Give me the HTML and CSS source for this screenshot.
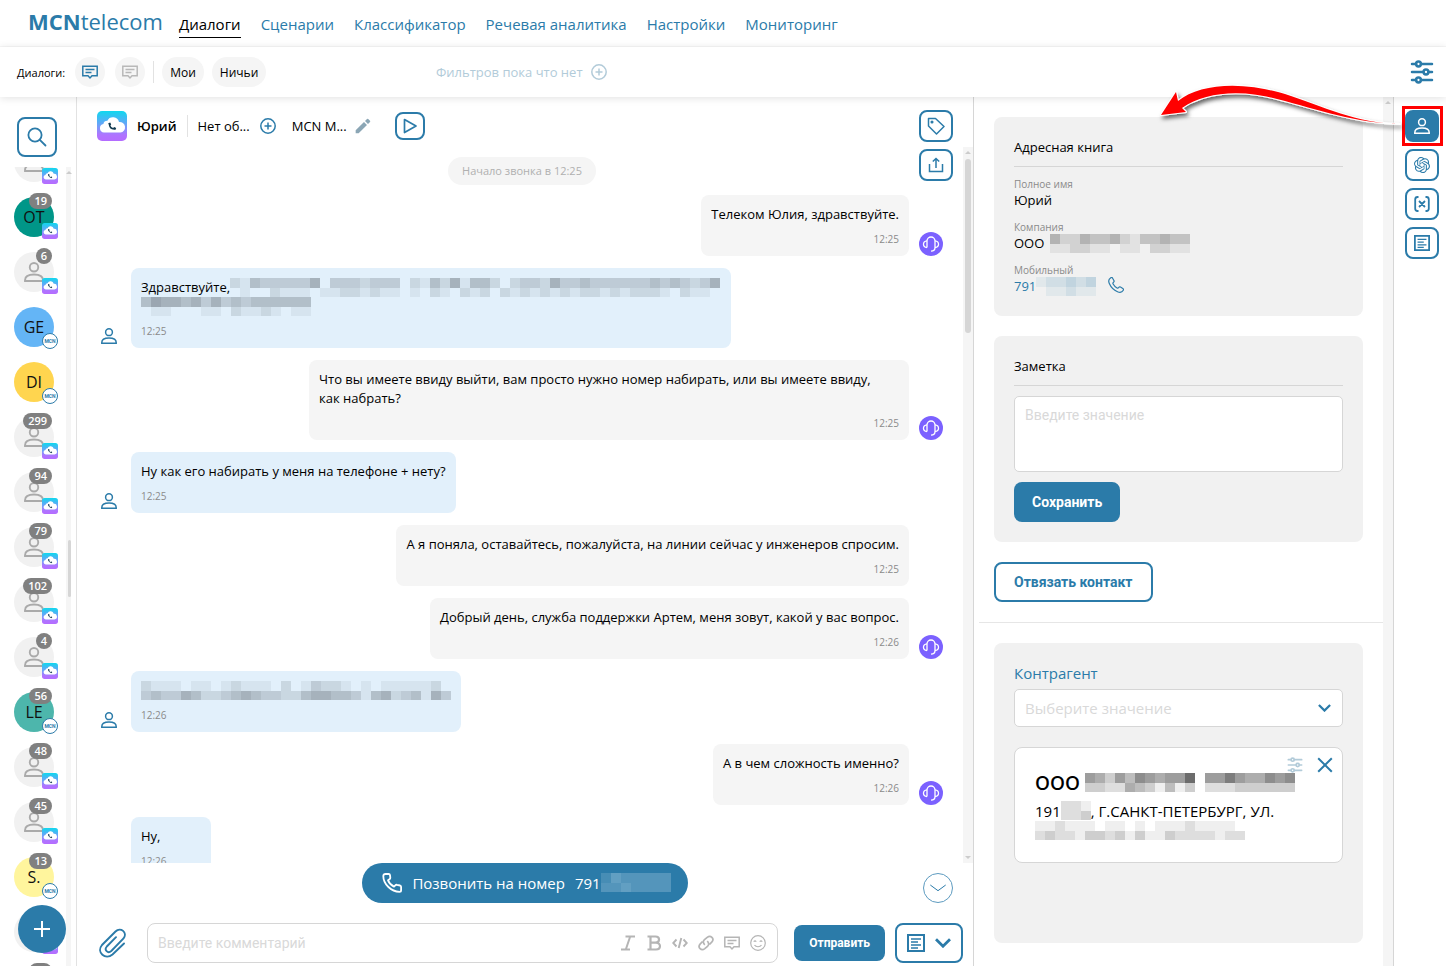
FILE: index.html
```html
<!DOCTYPE html>
<html lang="ru">
  <head>
    <meta charset="UTF-8" />
    <meta name="viewport" content="width=device-width, initial-scale=1.0" />
    <title>MCN Telecom</title>
    <link rel="stylesheet" href="styles.css">
  </head>
  <body>
    <!-- Icon set -->
    <svg class="sprite" aria-hidden="true">
      <defs>
        <linearGradient id="cloudBg" x1="0" y1="0" x2="0" y2="1">
          <stop offset="0" stop-color="#0fd8ee" />
          <stop offset="0.55" stop-color="#7d97fa" />
          <stop offset="0.8" stop-color="#b073ff" />
          <stop offset="1" stop-color="#b46cff" />
        </linearGradient>
        <filter id="arrowShadow" x="-10%" y="-20%" width="120%" height="160%">
          <feDropShadow dx="2" dy="3" stdDeviation="2" flood-opacity="0.6" />
        </filter>
      </defs>
      <symbol id="i-cloud" viewBox="0 0 30 30">
        <rect width="30" height="30" rx="5" fill="url(#cloudBg)" />
        <path fill="#fff" d="M7 21.500a4.300 4.300 0 0 1-.6-8.500 4 4 0 0 1 4-3.300A6.200 6.200 0 0 1 22 11a5.300 5.300 0 0 1 1.500 10.500z" />
        <path fill="none" stroke="#123a50" stroke-width="1.600" stroke-linecap="round" d="M12.500 13c0 3 2 4.800 4.800 5" />
        <path fill="#123a50" d="M11.200 12.200l2-.8 1 2.200-1.600 1.200zM15.800 17.200l1.400-1.300 2 1.200-.8 1.800z" />
      </symbol>
      <symbol id="i-user" viewBox="0 0 16 16">
        <g fill="none" stroke="currentColor" stroke-width="1.500">
          <circle cx="8" cy="4.200" r="3.400" />
          <path d="M.8 15.200v-.7C.8 11.500 3 10 8 10s7.200 1.500 7.200 4.500v.7z" />
        </g>
      </symbol>
      <symbol id="i-comment" viewBox="0 0 16 16">
        <g fill="none" stroke="currentColor" stroke-width="1.500">
          <path d="M.8 2.200h14.400v9.600H10L8 14l-2-2.200H.8z" />
          <path d="M3.500 5.500h9M3.500 8.500h6" />
        </g>
      </symbol>
      <symbol id="i-plus-circle" viewBox="0 0 16 16">
        <g fill="none" stroke="currentColor" stroke-width="1.500">
          <circle cx="8" cy="8" r="7.200" />
          <path d="M8 4.500v7M4.500 8h7" />
        </g>
      </symbol>
      <symbol id="i-sliders" viewBox="0 0 24 24">
        <g fill="none" stroke="currentColor" stroke-width="2.500" stroke-linecap="round">
          <path d="M2 4h4M11 4h11M2 12h11M19 12h3M2 20h4M11 20h11" />
          <circle cx="8.500" cy="4" r="2.400" />
          <circle cx="16" cy="12" r="2.400" />
          <circle cx="8.500" cy="20" r="2.400" />
        </g>
      </symbol>
      <symbol id="i-search" viewBox="0 0 20 20">
        <g fill="none" stroke="currentColor" stroke-width="1.800" stroke-linecap="round">
          <circle cx="8" cy="8" r="6.600" />
          <path d="M12.800 12.800L18.500 18.500" />
        </g>
      </symbol>
      <symbol id="i-pencil" viewBox="0 0 24 24">
        <path fill="currentColor" d="M1 18.500V23h4.500L18 10.500 13.500 6zM22.500 6a1.300 1.300 0 0 0 0-1.800l-2.700-2.700a1.300 1.300 0 0 0-1.800 0L15 4.500 19.500 9z" />
      </symbol>
      <symbol id="i-play" viewBox="0 0 16 16">
        <path fill="none" stroke="currentColor" stroke-width="1.700" stroke-linejoin="round" d="M2.500 1.500L14 8 2.500 14.500z" />
      </symbol>
      <symbol id="i-tag" viewBox="0 0 18 18">
        <g fill="none" stroke="currentColor" stroke-width="1.500" stroke-linejoin="round">
          <path d="M1.500 1.500h7L17 9.500 9.500 17 1.500 9z" />
          <circle cx="5" cy="5" r=".8" />
        </g>
      </symbol>
      <symbol id="i-upload" viewBox="0 0 16 16">
        <g fill="none" stroke="currentColor" stroke-width="1.500">
          <path d="M1.500 7v7.500h13V7M8 11V1.500M4.800 4.500L8 1.500l3.200 3" />
        </g>
      </symbol>
      <symbol id="i-headset" viewBox="0 0 24 24">
        <circle cx="12" cy="12" r="12" fill="#7b61ff" />
        <g fill="none" stroke="#fff" stroke-width="1.300">
          <path d="M8 15.500V9a4 4 0 0 1 8 0v6.500c0 2.300-1.200 3.700-4 3.700" />
          <path d="M8 8.800C3.300 9.300 3.300 15 8 15.500M16 8.800c4.700.5 4.700 6.200 0 6.700" />
        </g>
      </symbol>
      <symbol id="i-phone" viewBox="0 0 20 20">
        <path fill="none" stroke="currentColor" stroke-width="1.800" stroke-linejoin="round" d="M3.500 1h3.200c.8 0 1.200.5 1.300 1.200l.3 2.300c.1.800-.2 1.300-.8 1.700L6 7.300c1.200 2.800 3.200 5 6 6.300l1.300-1.300c.6-.6 1.100-.7 1.800-.5l3 .7c.7.200 1 .7 1 1.400v3.300c0 1-.6 1.600-1.600 1.600C9.500 18.500 1.300 11.500 1.300 3c0-1.300.8-2 2.200-2z" />
      </symbol>
      <symbol id="i-handset" viewBox="0 0 16 16">
        <path fill="none" stroke="currentColor" stroke-width="1.200" stroke-linejoin="round" d="M2.800.7c.7-.4 1.400-.2 1.800.5l1.300 2.300c.4.700.3 1.300-.4 1.800-.7.500-.8 1-.4 1.700.9 1.600 2.200 2.900 3.900 3.900.7.400 1.200.3 1.700-.4.500-.7 1.100-.8 1.800-.4l2.300 1.300c.7.400.9 1.100.5 1.800-1.200 2.100-3.200 2.600-5.800 1.500C5.600 13 3 10.400 1.300 6.500.2 3.900.7 1.900 2.800.7z" />
      </symbol>
      <symbol id="i-clip" viewBox="0 0 28 30">
        <path fill="none" stroke="currentColor" stroke-width="1.900" stroke-linecap="round" d="M26 15.500L14.500 26.500c-7 6-16.500-2-10.500-9.500L17.500 3.500c5-5 12.500 1 8 7L13.300 23c-3.500 3-7.500-1-4.500-4.500L18 9.200" />
      </symbol>
      <symbol id="i-italic" viewBox="0 0 16 16">
        <path fill="none" stroke="currentColor" stroke-width="2" d="M5.500 1.500H15M1 14.500h9M10.200 1.500L5.800 14.500" />
      </symbol>
      <symbol id="i-bold" viewBox="0 0 16 16">
        <path fill="none" stroke="currentColor" stroke-width="2.200" d="M1.500 1.500h8c4.700 0 4.700 6.200 0 6.200H4.500M1.500 14.500h8.500c5.300 0 5.300-6.800 0-6.800M4.500 1.500v13" />
      </symbol>
      <symbol id="i-code" viewBox="0 0 16 16">
        <path fill="none" stroke="currentColor" stroke-width="1.900" d="M4.500 4.500L1.200 8l3.300 3.500M11.500 4.500L14.800 8l-3.300 3.500M9.300 3L6.700 13" />
      </symbol>
      <symbol id="i-link" viewBox="0 0 16 16">
        <path fill="none" stroke="currentColor" stroke-width="1.700" d="M6.800 9.800C4.800 8 5 6 6.500 4.700l2.700-2.300c3.500-2.800 7.500 1.200 4.700 4.500L11.500 9.500M9.200 6.200c2 1.800 1.800 3.800.3 5.100l-2.700 2.300C3.300 16.400-.7 12.400 2.100 9.100L4.500 6.500" />
      </symbol>
      <symbol id="i-smile" viewBox="0 0 16 16">
        <g fill="none" stroke="currentColor" stroke-width="1.200">
          <circle cx="8" cy="8" r="7.300" />
          <path d="M3.800 6.700c.6-1 1.800-1 2.400 0M9.800 6.700c.6-1 1.800-1 2.400 0M4.500 10c1.500 2.300 5.500 2.300 7 0" />
        </g>
      </symbol>
      <symbol id="i-note" viewBox="0 0 18 18">
        <g fill="none" stroke="currentColor" stroke-width="2">
          <rect x="1" y="1" width="16" height="16" />
          <path d="M4 5h10M4 8h7M4 11h10M4 14h7" stroke-width="1.400" />
        </g>
      </symbol>
      <symbol id="i-chevron" viewBox="0 0 16 10">
        <path fill="none" stroke="currentColor" stroke-width="2.800" d="M1 1.200l7 7 7-7" />
      </symbol>
      <symbol id="i-chevron-thin" viewBox="0 0 16 8">
        <path fill="none" stroke="currentColor" d="M.3 1L8 6.700 15.700 1" />
      </symbol>
      <symbol id="i-close" viewBox="0 0 16 16">
        <path fill="none" stroke="currentColor" stroke-width="2" d="M1.200 1.200l13.600 13.600M14.800 1.200L1.200 14.800" />
      </symbol>
      <symbol id="i-plus" viewBox="0 0 16 16">
        <path fill="none" stroke="currentColor" stroke-width="2" d="M8 0v16M0 8h16" />
      </symbol>
      <symbol id="i-var" viewBox="0 0 16 16">
        <path fill="none" stroke="currentColor" stroke-width="1.800" d="M4.500 1H3.500Q1.200 1 1.200 3.500v9Q1.200 15 3.500 15h1M11.500 1h1q2.300 0 2.300 2.500v9q0 2.500-2.300 2.500h-1M5 5l6 6M11 5l-6 6" />
      </symbol>
      <symbol id="i-ai" viewBox="0 0 24 24">
        <path fill="currentColor" d="M22.2819 9.8211a5.9847 5.9847 0 0 0-.5157-4.9108 6.0462 6.0462 0 0 0-6.5098-2.9A6.0651 6.0651 0 0 0 4.9807 4.1818a5.9847 5.9847 0 0 0-3.9977 2.9 6.0462 6.0462 0 0 0 .7427 7.0966 5.98 5.98 0 0 0 .511 4.9107 6.051 6.051 0 0 0 6.5146 2.9001A5.9847 5.9847 0 0 0 13.2599 24a6.0557 6.0557 0 0 0 5.7718-4.2058 5.9894 5.9894 0 0 0 3.9977-2.9001 6.0557 6.0557 0 0 0-.7475-7.0729zm-9.022 12.6081a4.4755 4.4755 0 0 1-2.8764-1.0408l.1419-.0804 4.7783-2.7582a.7948.7948 0 0 0 .3927-.6813v-6.7369l2.02 1.1686a.071.071 0 0 1 .038.052v5.5826a4.504 4.504 0 0 1-4.4945 4.4944zm-9.6607-4.1254a4.4708 4.4708 0 0 1-.5346-3.0137l.142.0852 4.783 2.7582a.7712.7712 0 0 0 .7806 0l5.8428-3.3685v2.3324a.0804.0804 0 0 1-.0332.0615L9.74 19.9502a4.4992 4.4992 0 0 1-6.1408-1.6464zM2.3408 7.8956a4.485 4.485 0 0 1 2.3655-1.9728V11.6a.7664.7664 0 0 0 .3879.6765l5.8144 3.3543-2.0201 1.1685a.0757.0757 0 0 1-.071 0l-4.8303-2.7865A4.504 4.504 0 0 1 2.3408 7.872zm16.5963 3.8558L13.1038 8.364 15.1192 7.2a.0757.0757 0 0 1 .071 0l4.8303 2.7913a4.4944 4.4944 0 0 1-.6765 8.1042v-5.6772a.79.79 0 0 0-.407-.667zm2.0107-3.0231l-.142-.0852-4.7735-2.7818a.7759.7759 0 0 0-.7854 0L9.409 9.2297V6.8974a.0662.0662 0 0 1 .0284-.0615l4.8303-2.7866a4.4992 4.4992 0 0 1 6.6802 4.66zM8.3065 12.863l-2.02-1.1638a.0804.0804 0 0 1-.038-.0567V6.0742a4.4992 4.4992 0 0 1 7.3757-3.4537l-.142.0805L8.704 5.459a.7948.7948 0 0 0-.3927.6813zm1.0976-2.3654l2.602-1.4998 2.6069 1.4998v2.9994l-2.5974 1.4997-2.6067-1.4997Z" />
      </symbol>
    </svg>

    <header class="topbar">
      <a class="logo" href="#"><b>MCN</b>telecom</a>
      <nav class="nav">
        <a class="active" href="#">Диалоги</a>
        <a href="#">Сценарии</a>
        <a href="#">Классификатор</a>
        <a href="#">Речевая аналитика</a>
        <a href="#">Настройки</a>
        <a href="#">Мониторинг</a>
      </nav>
    </header>

    <div class="filters">
      <div class="filters-left">
        <span class="filters-label">Диалоги:</span>
        <button class="round blue" aria-label="Открытые"><svg class="s16"><use href="#i-comment" /></svg></button>
        <button class="round gray" aria-label="Закрытые"><svg class="s16"><use href="#i-comment" /></svg></button>
        <span class="split"></span>
        <button class="pill">Мои</button>
        <button class="pill">Ничьи</button>
      </div>
      <button class="add-filter">Фильтров пока что нет <svg class="s16"><use href="#i-plus-circle" /></svg></button>
      <button class="plain settings" aria-label="Настройки"><svg class="s24"><use href="#i-sliders" /></svg></button>
    </div>

    <main class="workspace">
      <aside class="contacts">
        <button class="search" aria-label="Поиск"><svg class="s20"><use href="#i-search" /></svg></button>
        <div class="contacts-body">
          <ul id="contactList" class="contact-list"></ul>
          <div class="scrollbar slim"><i class="up"></i><span class="thumb"></span></div>
        </div>
        <button class="fab" aria-label="Новый диалог"><svg class="s16"><use href="#i-plus" /></svg></button>
      </aside>

      <section class="chat">
        <div class="chat-head">
          <svg class="s30"><use href="#i-cloud" /></svg>
          <b class="chat-name">Юрий</b>
          <span class="split"></span>
          <span>Нет об...</span>
          <button class="plain blue" aria-label="Добавить"><svg class="s16"><use href="#i-plus-circle" /></svg></button>
          <span class="chat-topic">MCN М... <button class="plain pencil" aria-label="Изменить"><svg class="s16"><use href="#i-pencil" /></svg></button></span>
          <button class="box play" aria-label="Слушать"><svg class="s16"><use href="#i-play" /></svg></button>
        </div>
        <div class="chat-tools">
          <button class="box" aria-label="Тег"><svg class="s18"><use href="#i-tag" /></svg></button>
          <button class="box" aria-label="Экспорт"><svg class="s16"><use href="#i-upload" /></svg></button>
        </div>

        <div class="chat-body">
          <div class="messages">
            <div class="event">Начало звонка в 12:25</div>
            <div class="msg out">
              <div class="bubble"><p>Телеком Юлия, здравствуйте.</p><time>12:25</time></div>
              <svg class="s24"><use href="#i-headset" /></svg>
            </div>
            <div class="msg in">
              <svg class="s16"><use href="#i-user" /></svg>
              <div class="bubble">
                <p>Здравствуйте,<span class="mosaic" data-rows="2143333350333233302142514420233253343333334343235 0100211101122121101021021202121212122121222102110"></span><span class="mosaic" data-rows="465545353434444440 011000110211210110"></span></p>
                <time>12:25</time>
              </div>
            </div>
            <div class="msg out">
              <div class="bubble"><p>Что вы имеете ввиду выйти, вам просто нужно номер набирать, или вы имеете ввиду, как&nbsp;набрать?</p><time>12:25</time></div>
              <svg class="s24"><use href="#i-headset" /></svg>
            </div>
            <div class="msg in">
              <svg class="s16"><use href="#i-user" /></svg>
              <div class="bubble"><p>Ну как его набирать у меня на телефоне + нету?</p><time>12:25</time></div>
            </div>
            <div class="msg out">
              <div class="bubble"><p>А я поняла, оставайтесь, пожалуйста, на линии сейчас у инженеров спросим.</p><time>12:25</time></div>
            </div>
            <div class="msg out">
              <div class="bubble"><p>Добрый день, служба поддержки Артем, меня зовут, какой у вас вопрос.</p><time>12:26</time></div>
              <svg class="s24"><use href="#i-headset" /></svg>
            </div>
            <div class="msg in">
              <svg class="s16"><use href="#i-user" /></svg>
              <div class="bubble"><p><span class="mosaic" data-rows="2111011012111020132210101111120 3433542234543322455443145234153"></span></p><time>12:26</time></div>
            </div>
            <div class="msg out">
              <div class="bubble"><p>А в чем сложность именно?</p><time>12:26</time></div>
              <svg class="s24"><use href="#i-headset" /></svg>
            </div>
            <div class="msg in follow">
              <div class="bubble"><p>Ну,</p><time>12:26</time></div>
            </div>
          </div>
          <div class="scrollbar"><i class="up"></i><span class="thumb"></span><i class="down"></i></div>
        </div>

        <div class="call-row">
          <button class="call"><svg class="s20"><use href="#i-phone" /></svg><span>Позвонить на номер</span><span class="call-number">791<span class="mosaic" data-rows="2433333 3343333"></span></span></button>
          <button class="to-bottom" aria-label="Вниз"><svg><use href="#i-chevron-thin" /></svg></button>
        </div>

        <form class="composer">
          <button type="button" class="plain blue clip" aria-label="Файл"><svg><use href="#i-clip" /></svg></button>
          <div class="comment-box">
            <input type="text" aria-label="Комментарий" placeholder="Введите комментарий" />
            <button type="button" class="plain" aria-label="Курсив"><svg class="s16"><use href="#i-italic" /></svg></button>
            <button type="button" class="plain" aria-label="Жирный"><svg class="s16"><use href="#i-bold" /></svg></button>
            <button type="button" class="plain" aria-label="Код"><svg class="s16"><use href="#i-code" /></svg></button>
            <button type="button" class="plain" aria-label="Ссылка"><svg class="s16"><use href="#i-link" /></svg></button>
            <button type="button" class="plain" aria-label="Шаблон"><svg class="s16"><use href="#i-comment" /></svg></button>
            <button type="button" class="plain" aria-label="Смайл"><svg class="s16"><use href="#i-smile" /></svg></button>
          </div>
          <button type="submit" class="btn send">Отправить</button>
          <button type="button" class="box templates" aria-label="Шаблоны"><svg class="s18"><use href="#i-note" /></svg><svg class="chev"><use href="#i-chevron" /></svg></button>
        </form>
      </section>

      <aside class="details">
        <div class="details-body">
          <section class="card">
            <h2>Адресная книга</h2>
            <dl>
              <dt>Полное имя</dt>
              <dd>Юрий</dd>
              <dt>Компания</dt>
              <dd>ООО <span class="mosaic black" data-rows="42243342133433 11221101102211"></span></dd>
              <dt>Мобильный</dt>
              <dd><a href="#">791<span class="mosaic" data-rows="122323 011211"></span></a> <button class="plain blue" aria-label="Позвонить"><svg class="s16"><use href="#i-handset" /></svg></button></dd>
            </dl>
          </section>

          <section class="card">
            <h2><label for="note">Заметка</label></h2>
            <textarea id="note" placeholder="Введите значение"></textarea>
            <button class="btn">Сохранить</button>
          </section>

          <button class="btn outline">Отвязать контакт</button>
          <hr />

          <section class="card tall">
            <label class="field-label" for="agent">Контрагент</label>
            <div class="select">
              <select id="agent"><option>Выберите значение</option></select>
              <svg><use href="#i-chevron" /></svg>
            </div>
            <div class="agent">
              <div class="agent-actions">
                <button class="plain pale" aria-label="Параметры"><svg class="s16"><use href="#i-sliders" /></svg></button>
                <button class="plain blue" aria-label="Удалить"><svg class="s16"><use href="#i-close" /></svg></button>
              </div>
              <h3>ООО <span class="mosaic black" data-rows="653647656690668655767 332254314130222333333"></span></h3>
              <p>191<span class="mosaic black" data-rows="221 223"></span>, Г.САНКТ-ПЕТЕРБУРГ, УЛ.<br /><span class="mosaic black" data-rows="112111011010111211110 232213323131132222122"></span></p>
            </div>
          </section>
        </div>
        <div class="scrollbar"><i class="up"></i></div>
      </aside>

      <aside class="rail">
        <button class="box current" aria-label="Контакт">
          <svg class="s16"><use href="#i-user" /></svg>
          <span class="marker"></span>
          <svg class="arrow" viewBox="0 0 250 60">
            <path filter="url(#arrowShadow)" fill="#f00" stroke="#fff" stroke-width="2" stroke-linejoin="round" paint-order="stroke" d="M6 40L21 17l2 9C45 8 88 6 130 19c40 13 70 29 115 30C200 48 165 35 122 24 85 14 50 17 27 33l4 4z" />
          </svg>
        </button>
        <button class="box" aria-label="Ассистент"><svg class="s16"><use href="#i-ai" /></svg></button>
        <button class="box" aria-label="Переменные"><svg class="s16"><use href="#i-var" /></svg></button>
        <button class="box" aria-label="Заметки"><svg class="s16"><use href="#i-note" /></svg></button>
      </aside>
    </main>

    <script src="script.js"></script>
  </body>
</html>
```
FILE: styles.css
```css
* {
  box-sizing: border-box;
}

body {
  margin: 0;
  height: 100vh;
  display: flex;
  flex-direction: column;
  overflow: hidden;
  font-family: "Open Sans", "Noto Sans", sans-serif;
  font-size: 13px;
  color: #000;
  background: #fff;
}

a {
  color: #2b7ba9;
  text-decoration: none;
}

button {
  font-family: inherit;
  cursor: pointer;
}

svg {
  display: block;
  flex-shrink: 0;
}

.sprite {
  position: absolute;
  width: 0;
  height: 0;
}

.s16 { width: 16px; height: 16px; }
.s18 { width: 18px; height: 18px; }
.s20 { width: 20px; height: 20px; }
.s24 { width: 24px; height: 24px; }
.s30 { width: 30px; height: 30px; }

.blue { color: #2b7ba9; }
.gray { color: #b8b8b8; }
.pale { color: #b2cbd9; }

.plain {
  display: flex;
  padding: 0;
  border: none;
  background: none;
}

.box {
  display: flex;
  align-items: center;
  justify-content: center;
  width: 34px;
  height: 32px;
  padding: 0;
  border: 2px solid #2b7ba9;
  border-radius: 8px;
  background: #fff;
  color: #2b7ba9;
}

.btn {
  height: 40px;
  padding: 0 18px;
  border: none;
  border-radius: 8px;
  background: #2b7ba9;
  color: #fff;
  font-family: Roboto, sans-serif;
  font-size: 14px;
  font-weight: 700;
}

.btn.outline {
  border: 2px solid #2b7ba9;
  background: #fff;
  color: #2b7ba9;
}

.split {
  width: 1px;
  height: 22px;
  background: #e2e2e2;
}

/* Header */
.topbar {
  display: flex;
  align-items: center;
  gap: 16px;
  height: 47px;
  flex-shrink: 0;
  padding-left: 28px;
  border-bottom: 1px solid #f8f8f8;
}

.logo {
  font-size: 22px;
  line-height: 24px;
  padding-bottom: 4px;
}

.nav {
  display: flex;
  gap: 20px;
  font-size: 15px;
  line-height: 24px;
  padding-top: 4px;
}

.nav a {
  padding-bottom: 1px;
  border-bottom: 1px solid transparent;
}

.nav .active {
  color: #000;
  border-color: #000;
}

.filters {
  position: relative;
  z-index: 1;
  display: flex;
  align-items: center;
  height: 50px;
  flex-shrink: 0;
  padding: 0 12px 0 17px;
  background: #fff;
  box-shadow: 0 1px 8px rgba(0, 0, 0, 0.12);
  font-size: 11px;
}

.filters-left {
  display: flex;
  align-items: center;
  width: 419px;
}

.round {
  display: flex;
  align-items: center;
  justify-content: center;
  width: 30px;
  height: 30px;
  margin-left: 10px;
  padding: 0;
  border: none;
  border-radius: 50%;
  background: #f5f5f5;
}

.filters .split {
  margin-left: 8px;
}

.pill {
  height: 30px;
  margin-left: 8px;
  padding: 0 8px;
  border: none;
  border-radius: 16px;
  background: #f5f5f5;
  font-size: 12px;
}

.add-filter {
  display: flex;
  align-items: center;
  gap: 8px;
  padding: 0;
  border: none;
  background: none;
  color: #b2cbd9;
  font-size: 13px;
}

.settings {
  margin-left: auto;
  color: #2b7ba9;
}

.workspace {
  display: flex;
  flex: 1;
  min-height: 0;
}

/* Contact list */
.contacts {
  position: relative;
  display: flex;
  flex-direction: column;
  width: 77px;
  flex-shrink: 0;
  padding-top: 20px;
  border-right: 1px solid #e2e2e2;
}

.search {
  display: flex;
  align-items: center;
  justify-content: center;
  width: 40px;
  height: 40px;
  margin-left: 17px;
  padding: 0;
  border: 2px solid #2b7ba9;
  border-radius: 8px;
  background: #fff;
  color: #2b7ba9;
}

.contacts-body {
  display: flex;
  flex: 1;
  min-height: 0;
  margin-top: 10px;
}

.contact-list {
  width: 66px;
  margin: 0;
  padding: 0;
  list-style: none;
  overflow: hidden;
}

.contact {
  height: 55px;
  padding: 15px 0 0 14px;
}

.avatar {
  position: relative;
  display: flex;
  align-items: center;
  justify-content: center;
  width: 40px;
  height: 40px;
  border-radius: 50%;
  color: #111;
  font-size: 16px;
}

.avatar.empty {
  background: #f1f1f1;
  color: #aaa;
}

.count {
  position: absolute;
  top: -4px;
  right: 2px;
  height: 16px;
  padding: 0 5px;
  border-radius: 8px;
  background: #808080;
  color: #fff;
  font-size: 11px;
  font-weight: 600;
  line-height: 16px;
}

.channel {
  position: absolute;
  left: 28px;
  top: 26px;
}

.channel.mcn {
  width: 16px;
  height: 16px;
  border: 1px solid #2b7ba9;
  border-radius: 50%;
  background: #fff;
  color: #2b7ba9;
  font-family: Roboto, sans-serif;
  font-size: 5px;
  font-weight: 700;
  line-height: 14px;
  text-align: center;
}

.fab {
  position: absolute;
  left: 18px;
  bottom: 13px;
  display: flex;
  align-items: center;
  justify-content: center;
  width: 48px;
  height: 48px;
  padding: 0;
  border: none;
  border-radius: 50%;
  background: #2b7ba9;
  color: #fff;
}

/* Scrollbars */
.scrollbar {
  position: relative;
  width: 10px;
  flex-shrink: 0;
  background: #f5f5f5;
}

.scrollbar .thumb {
  position: absolute;
  top: 12px;
  left: 2px;
  right: 2px;
  height: 174px;
  border-radius: 3px;
  background: #d6d6d6;
}

.scrollbar .up,
.scrollbar .down {
  position: absolute;
  left: 2px;
  border: 3px solid transparent;
}

.scrollbar .up {
  top: 1px;
  border-bottom-color: #ccc;
}

.scrollbar .down {
  bottom: 1px;
  border-top-color: #ccc;
}

.scrollbar.slim {
  width: 5px;
}

.scrollbar.slim .thumb {
  top: 373px;
  right: 0;
  height: 57px;
}

.scrollbar.slim .up {
  left: 0;
}

/* Chat */
.chat {
  position: relative;
  display: flex;
  flex: 1;
  flex-direction: column;
  min-width: 0;
  border-right: 1px solid #d6d6d6;
}

.chat-head {
  display: flex;
  align-items: center;
  gap: 10px;
  height: 50px;
  flex-shrink: 0;
  padding: 8px 20px 0;
}

.chat-name {
  font-weight: 600;
}

.chat-topic {
  display: flex;
  align-items: center;
  gap: 8px;
  margin-left: 6px;
}

.pencil {
  color: #8ba6b5;
}

.box.play {
  width: 30px;
  height: 28px;
  margin-left: 14px;
}

.chat-tools {
  position: absolute;
  z-index: 1;
  top: 13px;
  right: 20px;
  display: flex;
  flex-direction: column;
  gap: 7px;
}

.chat-body {
  display: flex;
  flex: 1;
  min-height: 0;
}

.messages {
  display: flex;
  flex: 1;
  flex-direction: column;
  gap: 12px;
  min-width: 0;
  padding: 10px 20px 0 24px;
  overflow: hidden;
}

.event {
  align-self: center;
  flex-shrink: 0;
  height: 28px;
  margin-bottom: -2px;
  padding: 0 14px;
  border-radius: 14px;
  background: #f5f5f5;
  color: #b0b0b0;
  font-size: 11px;
  line-height: 28px;
}

.msg {
  display: flex;
  align-items: flex-end;
  flex-shrink: 0;
}

.msg.out {
  justify-content: flex-end;
  gap: 10px;
  padding-right: 34px;
}

.msg.out svg {
  margin-right: -34px;
}

.msg.in {
  gap: 14px;
}

.msg.in > svg {
  margin-bottom: 4px;
  color: #2b7ba9;
}

.msg.follow {
  padding-left: 30px;
}

.bubble {
  display: flex;
  flex-direction: column;
  max-width: 600px;
  min-width: 80px;
  padding: 10px;
  border-radius: 8px;
  background: #f5f5f5;
}

.bubble p {
  margin: 0;
  line-height: 19px;
}

.bubble time {
  align-self: flex-end;
  margin-top: 8px;
  color: #8a8a8a;
  font-size: 10px;
  line-height: 14px;
}

.in .bubble {
  background: #e2f0fb;
}

.in .bubble time {
  align-self: flex-start;
}

/* Hidden personal data */
.mosaic {
  display: inline-block;
  height: 19px;
  vertical-align: top;
  color: #4d5660;
}

.mosaic svg {
  display: block;
}

.mosaic.black {
  color: #333;
}

.call-row {
  position: relative;
  display: flex;
  justify-content: center;
  flex-shrink: 0;
}

.call {
  display: flex;
  align-items: center;
  gap: 10px;
  height: 40px;
  padding: 0 17px 0 20px;
  border: none;
  border-radius: 20px;
  background: #2b7ba9;
  color: #fff;
  font-size: 15px;
}

.call-number .mosaic {
  color: #d8ecf8;
}

.call-number {
  line-height: 20px;
}

.to-bottom {
  position: absolute;
  right: 20px;
  bottom: 0;
  display: flex;
  align-items: center;
  justify-content: center;
  width: 30px;
  height: 30px;
  padding: 0;
  border: 1px solid #5d9bc0;
  border-radius: 50%;
  background: #fff;
  color: #2b7ba9;
}

.to-bottom svg {
  width: 16px;
  height: 8px;
}

.composer {
  display: flex;
  align-items: center;
  flex-shrink: 0;
  padding: 20px 10px 3px 21px;
}

.clip svg {
  width: 28px;
  height: 30px;
}

.comment-box {
  display: flex;
  align-items: center;
  flex: 1;
  gap: 10px;
  height: 40px;
  min-width: 0;
  margin: 0 16px 0 21px;
  padding: 0 11px 0 10px;
  border: 1px solid #d6d6d6;
  border-radius: 8px;
}

.comment-box input {
  flex: 1;
  min-width: 0;
  padding: 0;
  border: none;
  outline: none;
  font-family: Roboto, sans-serif;
  font-size: 14px;
}

.comment-box .plain {
  color: #b5b5b5;
}

::placeholder {
  color: #d9d9d9;
  opacity: 1;
}

.send {
  height: 36px;
  padding: 0 15px;
  font-size: 12px;
}

.templates {
  gap: 10px;
  width: 68px;
  height: 40px;
  margin-left: 10px;
}

.templates .chev {
  width: 16px;
  height: 10px;
}

/* Contact details */
.details {
  display: flex;
  width: 420px;
  flex-shrink: 0;
  border-right: 1px solid #d6d6d6;
}

.details-body {
  flex: 1;
  min-width: 0;
  padding: 20px 20px 0;
  overflow: hidden;
}

.card {
  margin-bottom: 20px;
  padding: 20px;
  border-radius: 8px;
  background: #f1f1f1;
}

.card.tall {
  min-height: 300px;
}

.card h2 {
  margin: 0 0 10px;
  padding-bottom: 9px;
  border-bottom: 1px solid #d6d6d6;
  font-size: 13px;
  font-weight: 400;
  line-height: 20px;
}

dl {
  display: flex;
  flex-direction: column;
  margin: 0;
}

dt {
  color: #8a8a8a;
  font-size: 10px;
  line-height: 14px;
}

dd {
  display: flex;
  gap: 6px;
  height: 19px;
  margin: 0 0 10px;
  line-height: 19px;
}

dd:last-child {
  gap: 12px;
  margin-bottom: 0;
}

dd a .mosaic {
  color: #2b7ba9;
}

textarea {
  display: block;
  width: 100%;
  height: 76px;
  margin-bottom: 10px;
  padding: 10px;
  border: 1px solid #d6d6d6;
  border-radius: 5px;
  outline: none;
  resize: none;
  font-family: Roboto, sans-serif;
  font-size: 14px;
}

.details hr {
  margin: 20px -20px 20px -15px;
  border: none;
  border-top: 1px solid #e6e6e6;
}

.field-label {
  display: block;
  margin-bottom: 6px;
  color: #2b7ba9;
  font-size: 15px;
  line-height: 20px;
}

.select {
  position: relative;
}

.select select {
  width: 100%;
  height: 38px;
  padding: 0 10px;
  border: 1px solid #d6d6d6;
  border-radius: 5px;
  appearance: none;
  background: #fff;
  color: #d9d9d9;
  font-family: inherit;
  font-size: 15px;
}

.select svg {
  position: absolute;
  top: 15px;
  right: 12px;
  width: 13px;
  height: 8px;
  color: #2b7ba9;
}

.agent {
  margin-top: 20px;
  padding: 9px 9px 21px 20px;
  border: 1px solid #d6d6d6;
  border-radius: 8px;
  background: #fff;
}

.agent-actions {
  display: flex;
  justify-content: flex-end;
  gap: 14px;
}

.agent h3 {
  margin: 0;
  font-size: 19px;
  font-weight: 600;
  line-height: 20px;
}

.agent p {
  margin: 8px 0 0;
  font-size: 15px;
  line-height: 20px;
}

/* Right rail */
.rail {
  position: relative;
  z-index: 2;
  display: flex;
  flex-direction: column;
  align-items: flex-end;
  gap: 7px;
  width: 52px;
  flex-shrink: 0;
  padding: 13px 7px 0 0;
}

.rail .current {
  position: relative;
  background: #2b7ba9;
  color: #fff;
}

.marker {
  position: absolute;
  inset: -6px -6px -6px -5px;
  border: 3px solid #f00;
}

.arrow {
  position: absolute;
  right: 32px;
  top: -37px;
  width: 250px;
  height: 60px;
  overflow: visible;
}
```
FILE: script.js
```javascript
const contacts = [
  { channel: "cloud" },
  { name: "OT", color: "#009688", count: 19, channel: "cloud" },
  { count: 6, channel: "cloud" },
  { name: "GE", color: "#64b5f6", channel: "mcn" },
  { name: "DI", color: "#ffd54f", channel: "mcn" },
  { count: 299, channel: "cloud" },
  { count: 94, channel: "cloud" },
  { count: 79, channel: "cloud" },
  { count: 102, channel: "cloud" },
  { count: 4, channel: "cloud" },
  { name: "LE", color: "#4db6ac", count: 56, channel: "mcn" },
  { count: 48, channel: "cloud" },
  { count: 45, channel: "cloud" },
  { name: "S.", color: "#fff59d", count: 13, channel: "mcn" },
  { channel: "cloud" },
  { count: 21, channel: "cloud" },
];

const channelIcons = {
  cloud: '<svg class="s16 channel"><use href="#i-cloud" /></svg>',
  mcn: '<span class="channel mcn">MCN</span>',
};

const list = document.getElementById("contactList");

list.innerHTML = contacts
  .map(
    (contact) => `
      <li class="contact">
        <div class="avatar ${contact.name ? "" : "empty"}" ${contact.color ? `style="background: ${contact.color}"` : ""}>
          ${contact.name || '<svg class="s20"><use href="#i-user" /></svg>'}
          ${contact.count ? `<span class="count">${contact.count}</span>` : ""}
          ${channelIcons[contact.channel]}
        </div>
      </li>
    `
  )
  .join("");

list.scrollTop = 40;

// Each digit is the density of one 10px cell
document.querySelectorAll(".mosaic").forEach((el) => {
  const rows = el.dataset.rows.split(" ");
  const width = rows[0].length * 10;
  let cells = "";
  rows.forEach((row, y) => {
    [...row].forEach((digit, x) => {
      cells += `<rect x="${x * 10}" y="${y * 10}" width="10" height="10" fill="currentColor" fill-opacity="${digit * 0.08}" />`;
    });
  });
  el.innerHTML = `<svg width="${width}" height="19" shape-rendering="crispEdges">${cells}</svg>`;
});
```
